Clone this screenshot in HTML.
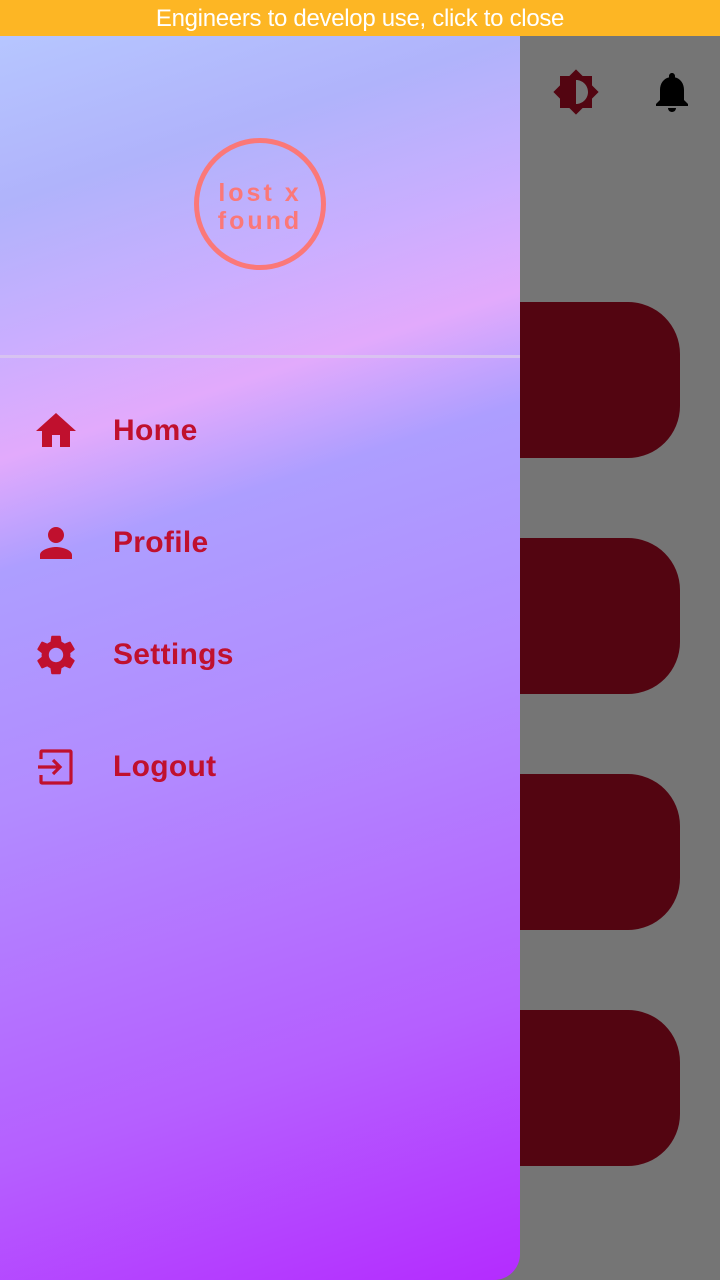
<!DOCTYPE html>
<html><head><meta charset="utf-8"><style>
*{margin:0;padding:0;box-sizing:border-box}
body{width:720px;height:1280px;overflow:hidden;background:#757575;position:relative;font-family:"Liberation Sans",sans-serif}
.top{position:absolute;left:0;top:0;width:720px;height:36px;background:#fdb624;color:#fff;font-size:24px;text-align:center;line-height:38px;letter-spacing:-0.3px}
.card{position:absolute;left:480px;width:200px;height:156px;background:#530511;border-radius:0 52px 52px 0}
.drawer{position:absolute;left:0;top:36px;width:520px;height:1244px;border-radius:0 0 26px 0;
background:linear-gradient(162deg,#b6c6ff 0%,#b0b3fb 12%,#caaeff 22%,#e2aafc 30%,#ad9eff 38%,#b28bff 55%,#b55fff 80%,#b42bff 100%)}
.line{position:absolute;left:0;top:319px;width:520px;height:3px;background:#d9c8ee;opacity:.8}
.logo{position:absolute;left:194px;top:102px;width:132px;height:132px;border:5px solid #fb7878;border-radius:50%;color:#fb7878;font-size:25px;letter-spacing:3px;text-align:center;line-height:28px;padding-top:36px;font-weight:bold}
.item{position:absolute;left:0;width:520px;height:60px}
.item svg{position:absolute;left:32px;top:6px;width:48px;height:48px}
.item span{position:absolute;left:113px;top:13px;font-size:30px;color:#c0102e;font-weight:bold;letter-spacing:0.3px}
</style></head><body>
<div class="top">Engineers to develop use, click to close</div>
<svg style="position:absolute;left:552px;top:68px" width="48" height="48" viewBox="0 0 24 24"><path fill="#530511" d="M20 8.69V4h-4.69L12 .69 8.69 4H4v4.69L.69 12 4 15.31V20h4.69L12 23.31 15.31 20H20v-4.69L23.31 12 20 8.69zM12 18V6c3.31 0 6 2.69 6 6s-2.69 6-6 6z"/></svg>
<svg style="position:absolute;left:648px;top:68px" width="48" height="48" viewBox="0 0 24 24"><path fill="#000" d="M12 22c1.1 0 2-.9 2-2h-4c0 1.1.9 2 2 2zm6-6v-5c0-3.07-1.640-5.64-4.5-6.32V4c0-.83-.67-1.5-1.5-1.5s-1.5.67-1.5 1.5v.68C7.63 5.36 6 7.92 6 11v5l-2 2v1h16v-1l-2-2z"/></svg>
<div class="card" style="top:302px"></div>
<div class="card" style="top:538px"></div>
<div class="card" style="top:774px"></div>
<div class="card" style="top:1010px"></div>
<div class="drawer">
<div class="logo">lost x<br>found</div>
<div class="line"></div>
<div class="item" style="top:365px"><svg viewBox="0 0 24 24"><path fill="#c0102e" d="M10 20v-6h4v6h5v-8h3L12 3 2 12h3v8z"/></svg><span>Home</span></div>
<div class="item" style="top:477px"><svg viewBox="0 0 24 24"><path fill="#c0102e" d="M12 12c2.21 0 4-1.79 4-4s-1.79-4-4-4-4 1.79-4 4 1.79 4 4 4zm0 2c-2.67 0-8 1.34-8 4v2h16v-2c0-2.66-5.33-4-8-4z"/></svg><span>Profile</span></div>
<div class="item" style="top:589px"><svg viewBox="0 0 24 24"><path fill="#c0102e" d="M19.14 12.94c.04-.3.06-.61.06-.94s-.02-.64-.07-.94l2.030-1.58a.49.49 0 00.12-.61l-1.92-3.32a.488.488 0 00-.59-.22l-2.39.96c-.5-.38-1.03-.7-1.62-.94l-.36-2.54a.484.484 0 00-.48-.41h-3.84c-.24 0-.43.17-.47.41l-.36 2.54c-.59.24-1.13.57-1.62.94l-2.39-.96c-.22-.08-.47 0-.59.22L2.74 8.87c-.12.21-.08.47.12.61l2.03 1.58c-.05.3-.09.63-.09.94s.02.64.07.94l-2.03 1.58a.49.49 0 00-.12.61l1.92 3.32c.12.22.37.29.59.22l2.39-.96c.5.38 1.03.7 1.62.94l.36 2.54c.05.24.24.41.48.41h3.840c.24 0 .44-.17.47-.41l.36-2.54c.59-.24 1.13-.56 1.62-.94l2.39.96c.22.08.47 0 .59-.22l1.92-3.32c.12-.22.07-.47-.12-.61l-2.01-1.58zM12 15.6c-1.98 0-3.6-1.62-3.6-3.6s1.62-3.6 3.6-3.6 3.6 1.62 3.6 3.6-1.62 3.6-3.6 3.6z"/></svg><span>Settings</span></div>
<div class="item" style="top:701px"><svg viewBox="0 0 24 24"><path fill="none" stroke="#c0102e" stroke-width="1.6" d="M4.5 8V4.5c0-.3.2-.5.5-.5h14c.3 0 .5.2.5.5v15c0 .3-.2.5-.5.5H5c-.3 0-.5-.2-.5-.5V16M3 12h11M10.5 8.5L14 12l-3.5 3.5"/></svg><span>Logout</span></div>
</div>
</body></html>
